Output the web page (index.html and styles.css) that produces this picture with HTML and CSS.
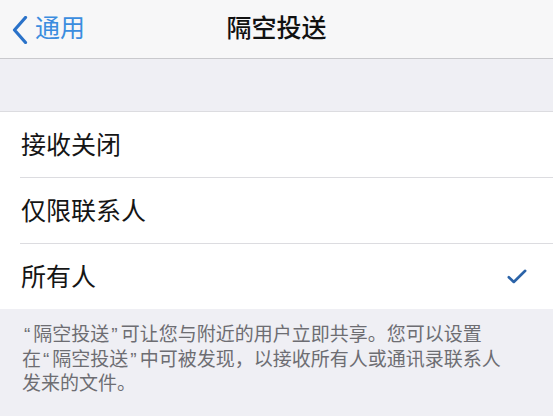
FILE: index.html
```html
<!DOCTYPE html>
<html lang="zh-CN">
<head>
<meta charset="utf-8">
<link rel="stylesheet" href="styles.css">
</head>
<body>
<div class="screen">
  <header class="nav">
    <div class="back">
      <svg class="chev" width="16" height="28" viewBox="0 0 16 28"><path d="M13.5 1.5 L2.5 14 L13.5 26.5" fill="none" stroke="#2a72c9" stroke-width="3.2" stroke-linecap="round" stroke-linejoin="round"/></svg>
      <span class="back-label">通用</span>
    </div>
    <h1 class="title">隔空投送</h1>
    <div class="nav-spacer"></div>
  </header>
  <div class="band"></div>
  <ul class="group">
    <li class="row"><span>接收关闭</span></li>
    <li class="row"><span>仅限联系人</span></li>
    <li class="row"><span>所有人</span>
      <svg class="check" width="20" height="15" viewBox="0 0 20 15"><path d="M1.8 8.2 L6.8 13 L18.2 1.8" fill="none" stroke="#2b63a8" stroke-width="2.6" stroke-linecap="round" stroke-linejoin="round"/></svg>
    </li>
  </ul>
  <p class="footer"><span class="q">“</span>隔空投送<span class="q">”</span>可让您与附近的用户立即共享。您可以设置<br>在<span class="q">“</span>隔空投送<span class="q">”</span>中可被发现，以接收所有人或通讯录联系人<br>发来的文件。</p>
</div>
</body>
</html>
```
FILE: styles.css
```css
html, body {
  margin: 0;
  padding: 0;
}
body {
  background: #efeff4;
  font-family: "Noto Sans CJK SC", "Noto Sans", sans-serif;
  width: 553px;
  height: 416px;
  overflow: hidden;
}
.screen {
  display: flex;
  flex-direction: column;
  height: 416px;
}
.nav {
  height: 58px;
  background: #f7f7f8;
  border-bottom: 1px solid #c9c9cd;
  display: flex;
  align-items: center;
  padding: 0 12px;
}
.back {
  flex: 1;
  display: flex;
  align-items: center;
  gap: 7px;
}
.chev {
  margin-top: 1px;
}
.back-label {
  color: #3b8ddf;
  font-size: 25px;
  line-height: 1;
  margin-top: -6px;
}
.title {
  margin: -5px 0 0;
  font-size: 25px;
  font-weight: 500;
  color: #111;
  line-height: 1;
}
.nav-spacer {
  flex: 1;
}
.band {
  height: 52px;
  background: #efeff4;
  border-bottom: 1px solid #dcdce0;
}
.group {
  list-style: none;
  margin: 0;
  padding: 0 0 0 20px;
  background: #fff;
}
.row {
  height: 66px;
  display: flex;
  align-items: center;
  justify-content: space-between;
  padding: 0 26px 3px 1px;
  border-bottom: 1px solid #dcdce0;
  font-size: 25px;
  color: #151515;
  box-sizing: border-box;
}
.row:last-child {
  border-bottom: none;
  height: 65px;
}
.check {
  margin-top: 2px;
}
.footer {
  margin: 0;
  padding: 13px 0 0 22px;
  font-size: 19px;
  line-height: 22.5px;
  color: #6d6d72;
  white-space: nowrap;
}
.q {
  font-family: "Liberation Sans", sans-serif;
  padding: 0 3px 0 2px;
}
```
